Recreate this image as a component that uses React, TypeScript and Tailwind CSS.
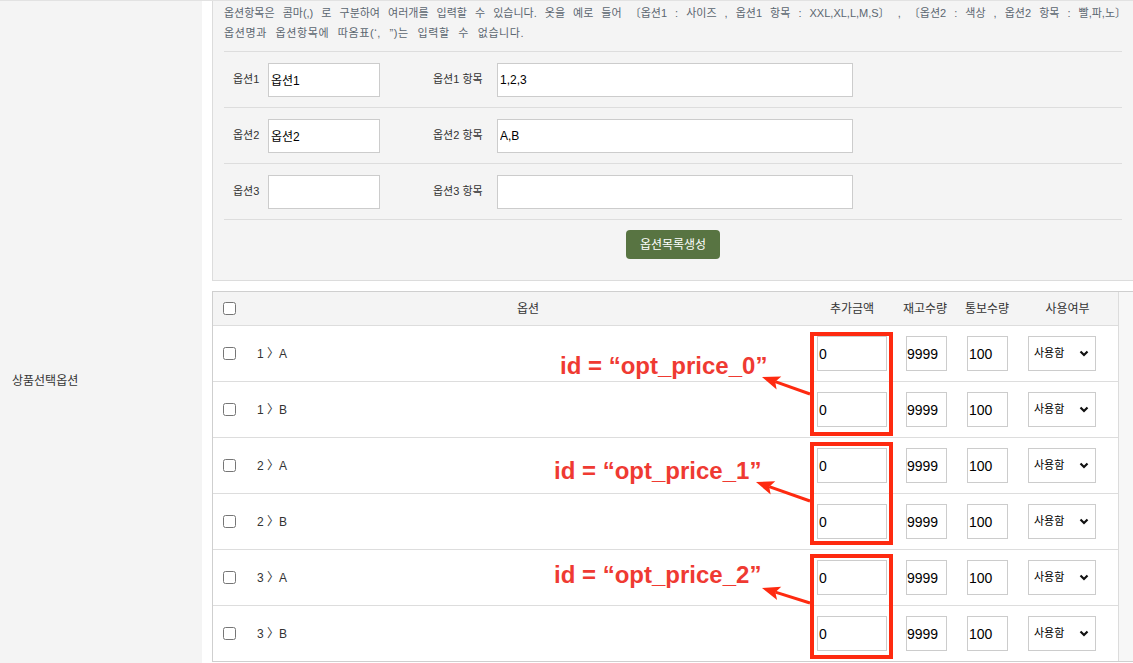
import React from 'react';

type Pt = [number, number];

const formRows = [
  { label: '옵션1', name: '옵션1', itemLabel: '옵션1 항목', items: '1,2,3' },
  { label: '옵션2', name: '옵션2', itemLabel: '옵션2 항목', items: 'A,B' },
  { label: '옵션3', name: '', itemLabel: '옵션3 항목', items: '' },
];

const optionRows = [
  ['1', 'A'],
  ['1', 'B'],
  ['2', 'A'],
  ['2', 'B'],
  ['3', 'A'],
  ['3', 'B'],
];

// red callouts drawn over the option table (coords relative to the table box)
const callouts = [
  { id: 'opt_price_0', left: 'left-[348px] top-[60px]', box: 'top-[40px] h-[104px]', from: [598, 102] as Pt, to: [550, 85] as Pt },
  { id: 'opt_price_1', left: 'left-[342px] top-[165px]', box: 'top-[150px] h-[103px]', from: [598, 209] as Pt, to: [544, 190] as Pt },
  { id: 'opt_price_2', left: 'left-[342px] top-[269px]', box: 'top-[262px] h-[105px]', from: [598, 311] as Pt, to: [550, 296] as Pt },
];

function Arrow({ from, to }: { from: Pt; to: Pt }) {
  const [x1, y1] = from;
  const [x2, y2] = to;
  const len = Math.hypot(x2 - x1, y2 - y1);
  const ux = (x2 - x1) / len;
  const uy = (y2 - y1) / len;
  const head = 18;
  const half = 7;
  const bx = x2 - ux * head;
  const by = y2 - uy * head;
  const nx = x2 - ux * (head - 4);
  const ny = y2 - uy * (head - 4);
  const px = -uy * half;
  const py = ux * half;
  return (
    <g>
      <line x1={x1} y1={y1} x2={nx} y2={ny} stroke="#fe2a10" strokeWidth={3} />
      <polygon
        points={`${x2},${y2} ${bx + px},${by + py} ${nx},${ny} ${bx - px},${by - py}`}
        fill="#fe2a10"
      />
    </g>
  );
}

const OptionForm: React.FC = () => (
  <div className="h-[280px] bg-[#f4f4f4] border-l border-b border-[#dcdcdc] pl-[11px] pr-[11px] pt-[2px]">
    <div className="text-[11px] leading-[20px] text-[#5b6670] whitespace-nowrap [word-spacing:5px]">
      <p>
        옵션항목은 콤마(,) 로 구분하여 여러개를 입력할 수 있습니다. 옷을 예로 들어 〔옵션1 : 사이즈 , 옵션1 항목 : XXL,XL,L,M,S〕 , 〔옵션2 : 색상 , 옵션2 항목 : 빨,파,노〕
      </p>
      <p className="tracking-[0.6px]">옵션명과 옵션항목에 따옴표(‘, ”)는 입력할 수 없습니다.</p>
    </div>

    <div className="mt-[8px]">
      {formRows.map((row) => (
        <div key={row.label} className="h-[56px] border-t border-[#dddddd] flex items-center text-[11px] text-[#333]">
          <div className="w-[209px] shrink-0 flex items-center pl-[9px]">
            <span className="w-[35px]">{row.label}</span>
            <input
              defaultValue={row.name}
              className="w-[112px] h-[34px] border border-[#cccccc] bg-white px-[2px] text-[12px] text-black outline-none"
            />
          </div>
          <div className="flex items-center">
            <span className="w-[64px]">{row.itemLabel}</span>
            <input
              defaultValue={row.items}
              className="w-[356px] h-[34px] border border-[#cccccc] bg-white px-[2px] text-[12px] text-black outline-none"
            />
          </div>
        </div>
      ))}
      <div className="border-t border-[#dddddd] pt-[10px] flex justify-center">
        <button className="w-[94px] h-[29px] rounded-[4px] bg-[#587442] text-white text-[12px]">
          옵션목록생성
        </button>
      </div>
    </div>
  </div>
);

const OptionTable: React.FC = () => (
  <div className="relative mt-[10px] flex border-t border-b border-[#cfcfcf]">
    <div className="w-[906px] shrink-0 border-l border-[#cfcfcf] text-[12px] text-[#333]">
      {/* header */}
      <div className="h-[34px] bg-[#f4f4f4] border-b border-[#dddddd] grid grid-cols-[32px_566px_82px_64px_60px_101px] items-center">
        <div className="pl-[10px] flex items-center">
          <input type="checkbox" className="w-[13px] h-[13px] m-0" />
        </div>
        <div className="text-center">옵션</div>
        <div className="text-center">추가금액</div>
        <div className="text-center">재고수량</div>
        <div className="text-center">통보수량</div>
        <div className="text-center">사용여부</div>
      </div>

      {optionRows.map(([n, v], i) => (
        <div
          key={i}
          className="h-[56px] border-b border-[#dddddd] last:border-b-0 last:h-[55px] grid grid-cols-[32px_566px_82px_64px_60px_101px] items-center"
        >
          <div className="pl-[10px] flex items-center">
            <input type="checkbox" className="w-[13px] h-[13px] m-0" />
          </div>
          <div className="pl-[12px]">
            {n} 〉{v}
          </div>
          <div className="flex justify-center">
            <input
              defaultValue="0"
              className="w-[70px] h-[35px] border border-[#cccccc] bg-white px-[1px] text-[14px] text-black outline-none"
            />
          </div>
          <div className="pl-[13px]">
            <input
              defaultValue="9999"
              className="w-[41px] h-[35px] border border-[#cccccc] bg-white px-0 text-[14px] text-black outline-none"
            />
          </div>
          <div className="pl-[10px]">
            <input
              defaultValue="100"
              className="w-[41px] h-[35px] border border-[#cccccc] bg-white px-[1px] text-[14px] text-black outline-none"
            />
          </div>
          <div className="pl-[11px]">
            <div className="w-[68px] h-[35px] border border-[#cccccc] bg-white flex items-center justify-between pl-[5px] pr-[6px] text-[11px] text-black">
              <span>사용함</span>
              <svg width="10" height="7" viewBox="0 0 10 7" fill="none">
                <path d="M1.5 1.5 L5 5 L8.5 1.5" stroke="#111" strokeWidth="2.2" />
              </svg>
            </div>
          </div>
        </div>
      ))}
    </div>
    <div className="flex-1 bg-[#f7f7f7] border-l border-[#dcdcdc]" />

    {/* annotation overlay */}
    {callouts.map((c) => (
      <React.Fragment key={c.id}>
        <div className={`absolute left-[598px] w-[83px] border-[4px] border-[#fe2a10] ${c.box}`} />
        <div
          className={`absolute ${c.left} whitespace-nowrap font-['Liberation_Sans',Arial,sans-serif] font-bold text-[24px] leading-[28px] text-[#ef3a32]`}
        >
          id = “{c.id}”
        </div>
      </React.Fragment>
    ))}
    <svg className="absolute left-0 top-0 pointer-events-none" width="921" height="372">
      {callouts.map((c) => (
        <Arrow key={c.id} from={c.from} to={c.to} />
      ))}
    </svg>
  </div>
);

export default function App() {
  return (
    <div className="w-[1133px] h-[663px] overflow-hidden bg-white border-t border-[#e2e2e2] flex font-['Liberation_Sans','Noto_Sans_CJK_KR',sans-serif] text-[#333]">
      <div className="w-[202px] shrink-0 bg-[#f4f4f4] pl-[12px] pt-[371px] text-[12px] leading-[18px]">
        상품선택옵션
      </div>
      <div className="flex-1 min-w-0 pl-[10px] flex flex-col">
        <OptionForm />
        <OptionTable />
      </div>
    </div>
  );
}
